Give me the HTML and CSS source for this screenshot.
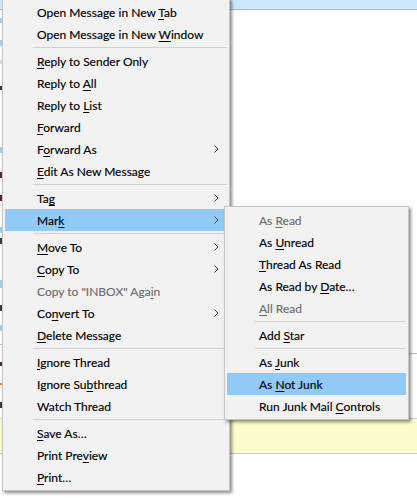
FILE: index.html
```html
<!DOCTYPE html>
<html lang="en">
<head>
<meta charset="utf-8">
<title>Message context menu</title>
<link rel="stylesheet" href="styles.css">
</head>
<body>
<div class="app">
  <div class="left-strip"></div>
  <div class="panes">
    <div class="sel-row"></div>
    <div class="list-area"></div>
    <div class="header-area"></div>
    <div class="notice"></div>
    <div class="body-area"></div>
  </div>

  <div class="menu main-menu">
    <div class="item"><span class="label">Open Message in New <u>T</u>ab</span></div>
    <div class="item"><span class="label">Open Message in New <u>W</u>indow</span></div>
    <div class="sep"></div>
    <div class="item"><span class="label"><u>R</u>eply to Sender Only</span></div>
    <div class="item"><span class="label">Reply to <u>A</u>ll</span></div>
    <div class="item"><span class="label">Reply to <u>L</u>ist</span></div>
    <div class="item"><span class="label"><u>F</u>orward</span></div>
    <div class="item"><span class="label">F<u>o</u>rward As</span><svg class="chev" viewBox="0 0 5 8"><path d="M0.5 0.5 L4 4 L0.5 7.5"/></svg></div>
    <div class="item"><span class="label"><u>E</u>dit As New Message</span></div>
    <div class="sep"></div>
    <div class="item"><span class="label">Ta<u>g</u></span><svg class="chev" viewBox="0 0 5 8"><path d="M0.5 0.5 L4 4 L0.5 7.5"/></svg></div>
    <div class="item active"><span class="label">Mar<u>k</u></span><svg class="chev" viewBox="0 0 5 8"><path d="M0.5 0.5 L4 4 L0.5 7.5"/></svg></div>
    <div class="sep"></div>
    <div class="item"><span class="label"><u>M</u>ove To</span><svg class="chev" viewBox="0 0 5 8"><path d="M0.5 0.5 L4 4 L0.5 7.5"/></svg></div>
    <div class="item"><span class="label"><u>C</u>opy To</span><svg class="chev" viewBox="0 0 5 8"><path d="M0.5 0.5 L4 4 L0.5 7.5"/></svg></div>
    <div class="item disabled"><span class="label">Copy to "INBOX" Aga<u>i</u>n</span></div>
    <div class="item"><span class="label">Co<u>n</u>vert To</span><svg class="chev" viewBox="0 0 5 8"><path d="M0.5 0.5 L4 4 L0.5 7.5"/></svg></div>
    <div class="item"><span class="label"><u>D</u>elete Message</span></div>
    <div class="sep"></div>
    <div class="item"><span class="label"><u>I</u>gnore Thread</span></div>
    <div class="item"><span class="label">Ignore Su<u>b</u>thread</span></div>
    <div class="item"><span class="label">Watch Thread</span></div>
    <div class="sep"></div>
    <div class="item"><span class="label"><u>S</u>ave As…</span></div>
    <div class="item"><span class="label">Print Pre<u>v</u>iew</span></div>
    <div class="item"><span class="label"><u>P</u>rint…</span></div>
  </div>

  <div class="menu sub-menu">
    <div class="item disabled"><span class="label">As <u>R</u>ead</span></div>
    <div class="item"><span class="label">As <u>U</u>nread</span></div>
    <div class="item"><span class="label"><u>T</u>hread As Read</span></div>
    <div class="item"><span class="label">As Read by <u>D</u>ate…</span></div>
    <div class="item disabled"><span class="label"><u>A</u>ll Read</span></div>
    <div class="sep"></div>
    <div class="item"><span class="label">Add <u>S</u>tar</span></div>
    <div class="sep"></div>
    <div class="item"><span class="label">As <u>J</u>unk</span></div>
    <div class="item active"><span class="label">As <u>N</u>ot Junk</span></div>
    <div class="item"><span class="label">Run Junk Mail <u>C</u>ontrols</span></div>
  </div>
</div>
</body>
</html>
```
FILE: styles.css
```css
* { box-sizing: border-box; }

html, body {
  margin: 0;
  padding: 0;
  background: #ffffff;
}

.app {
  position: relative;
  width: 417px;
  height: 498px;
  overflow: hidden;
  display: flex;
  font-family: "Lato", "Open Sans", sans-serif;
  font-size: 12px;
  color: #000;
}

/* fragments of the message list peeking out on the far left */
.left-strip {
  width: 2px;
  flex: none;
  background: linear-gradient(to bottom,
    #cce8ff 0 9px, #84c1f0 9px 10px, #ffffff 10px 18px,
    #9ed0f0 18px 23px, #ffffff 23px 40px,
    #9ed0f0 40px 46px, #ffffff 46px 60px,
    #d2e6c8 60px 64px, #ffffff 64px 86px,
    #3a3a3a 86px 90px, #ffffff 90px 147px,
    #9ed0f0 147px 153px, #ffffff 153px 172px,
    #5a2a2a 172px 178px, #ffffff 178px 195px,
    #5a2a2a 195px 201px, #ffffff 201px 227px,
    #9ed0f0 227px 233px, #ffffff 233px 238px,
    #3a3a3a 238px 244px, #ffffff 244px 280px,
    #9ed0f0 280px 288px, #ffffff 288px 305px,
    #3a3a3a 305px 311px, #ffffff 311px 325px,
    #9ed0f0 325px 331px, #ffffff 331px 344px,
    #b8c4d0 344px 345px, #ffffff 345px 362px,
    #4a2a3a 362px 366px, #ffffff 366px 383px,
    #e08a30 383px 385px, #ffffff 385px 402px,
    #3a3a3a 402px 408px, #ffffff 408px 418px,
    #cfcfcf 418px 419px, #fdfccd 419px 453px,
    #c8c8c8 453px 454px, #ffffff 454px 498px);
}

.panes {
  flex: 1;
  display: flex;
  flex-direction: column;
}

.sel-row {
  height: 10px;
  background: #cce8ff;
  border-bottom: 1px solid #84c1f0;
}

.list-area {
  height: 343px;
  background: #ffffff;
}

.header-area {
  height: 66px;
  background: #ffffff;
  border-top: 1px solid #b4c2d4;
  border-bottom: 1px solid #cfcfcf;
}

.notice {
  height: 35px;
  background: #fdfccd;
  border-bottom: 1px solid #c8c8c8;
}

.body-area {
  flex: 1;
  background: #ffffff;
}

/* popup menus */
.menu {
  position: absolute;
  background: #f2f2f2;
  border: 1px solid #c6c6c6;
  padding: 2px;
  box-shadow: 2px 2px 3px rgba(0, 0, 0, 0.45);
  display: flex;
  flex-direction: column;
}

.main-menu {
  left: 2px;
  top: -2px;
  width: 228px;
  z-index: 1;
}

.sub-menu {
  left: 224px;
  top: 206px;
  width: 185px;
  z-index: 2;
}

.item {
  height: 22px;
  flex: none;
  display: flex;
  align-items: center;
  padding-left: 32px;
  padding-right: 8px;
  white-space: nowrap;
}

.item .label {
  flex: 1;
  line-height: 22px;
  padding-top: 2px;
  -webkit-text-stroke: 0.15px currentColor;
}

.item u {
  text-decoration: underline;
  text-decoration-thickness: 1px;
  text-underline-offset: 2px;
}

.item.active {
  background: #91c9f7;
}

.item.disabled {
  color: #6d6d6d;
}

.chev {
  width: 5px;
  height: 8px;
  flex: none;
}

.chev path {
  fill: none;
  stroke: #404040;
  stroke-width: 1;
}

.sep {
  height: 5px;
  flex: none;
  margin-left: 28px;
  padding-top: 2px;
}

.sep::after {
  content: "";
  display: block;
  height: 1px;
  background: #d3d3d3;
}
```
